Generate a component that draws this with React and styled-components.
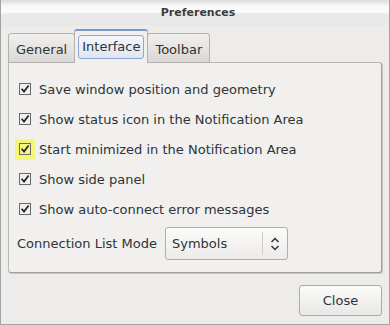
import React from 'react';
import styled, { createGlobalStyle } from 'styled-components';

const Global = createGlobalStyle`
    html, body {
        margin: 0;
        padding: 0;
        background: #edeceb;
    }
    * {
        box-sizing: border-box;
    }
`

const Window = styled.div`
    width: 390px;
    height: 325px;
    display: flex;
    flex-direction: column;
    background: #edeceb;
    border: 1px solid #a3a3a3;
    border-top: none;
    font-family: "DejaVu Sans", sans-serif;
    font-size: 13px;
    color: #2e3436;
`

const TitleBar = styled.div`
    height: 25px;
    display: flex;
    align-items: center;
    justify-content: center;
    padding-left: 6px;
    font-size: 11px;
    font-weight: bold;
    color: #3c3c3c;
    background: linear-gradient(#dcdcdc 0px, #f8f8f8 6px, #fbfbfb 12px, #eaeaea 14px, #e8e7e6 100%);
`

const Body = styled.div`
    flex: 1;
    display: flex;
    flex-direction: column;
    padding: 5px 7px 8px 7px;
`

const TabRow = styled.div`
    display: flex;
    align-items: flex-end;
    height: 33px;
    position: relative;
    z-index: 1;
`

const Tab = styled.div`
    height: ${p => (p.active ? '34px' : '30px')};
    padding: ${p => (p.active ? '4px 3px 4px' : '0 7px')};
    display: flex;
    align-items: center;
    border: 1px solid #b3b1ae;
    border-bottom: ${p => (p.active ? 'none' : '1px solid #b3b1ae')};
    border-top: ${p => (p.active ? '2px solid #7a9ac6' : '1px solid #b3b1ae')};
    border-radius: 3px 3px 0 0;
    margin-left: ${p => (p.active ? '-1px' : '0')};
    margin-right: ${p => (p.active ? '-1px' : '0')};
    background: ${p => (p.active ? '#f1f0ef' : 'linear-gradient(#f1f0ef, #dad8d6)')};
    position: relative;
    z-index: ${p => (p.active ? 2 : 1)};
`

const TabLabel = styled.div`
    padding: ${p => (p.active ? '3px 3px' : '3px 0 0')};
    border: ${p => (p.active ? '1px solid #8fa8cf' : 'none')};
    border-radius: 3px;
    background: ${p => (p.active ? 'linear-gradient(#f4f6fb, #dfe6f2)' : 'transparent')};
    line-height: 16px;
`

const Panel = styled.div`
    height: 211px;
    margin-top: -1px;
    background: #f1f0ef;
    border: 1px solid #b9b7b4;
    border-right-color: #a2a09d;
    border-bottom-color: #a2a09d;
    box-shadow: 1px 1px 0 #c9c7c4;
    border-radius: 0 3px 3px 3px;
    padding: 11px 0 0 10px;
    display: flex;
    flex-direction: column;
`

const Row = styled.div`
    height: 30px;
    display: flex;
    align-items: center;
    gap: 8px;
`

const BoxWrap = styled.div`
    width: 20px;
    height: 21px;
    margin-left: -4px;
    margin-right: -4px;
    display: flex;
    align-items: center;
    justify-content: center;
    background: ${p => (p.hl ? '#f5f57a' : 'transparent')};
`

const ComboRow = styled.div`
    margin-top: 3px;
    margin-left: -2px;
    display: flex;
    align-items: center;
    gap: 8px;
`

const Combo = styled.div`
    width: 123px;
    height: 33px;
    display: flex;
    align-items: center;
    border: 1px solid #b0aeab;
    border-radius: 3px;
    background: linear-gradient(#fbfbfa, #ecebe9);
`

const ComboText = styled.div`
    flex: 1;
    padding-left: 6px;
`

const ComboSep = styled.div`
    width: 1px;
    height: 23px;
    background: #cfcdca;
`

const ComboArrow = styled.div`
    width: 24px;
    display: flex;
    justify-content: center;
`

const Footer = styled.div`
    margin-top: auto;
    display: flex;
    justify-content: flex-end;
`

const Button = styled.div`
    width: 83px;
    height: 31px;
    display: flex;
    align-items: center;
    justify-content: center;
    border: 1px solid #adaba8;
    border-radius: 3px;
    background: linear-gradient(#fbfbfa, #e9e8e6);
`

function Check() {
    return (
        <svg width="12" height="12" viewBox="0 0 12 12">
            <rect x="0.5" y="0.5" width="11" height="11" fill="none" stroke="#6a6a6a" />
            <path d="M2.6 5.8 L5 8.6 L9.6 2.4" fill="none" stroke="#1f1f1f" strokeWidth="1.6" />
        </svg>
    )
}

function UpDown() {
    return (
        <svg width="10" height="14" viewBox="0 0 10 14">
            <path d="M1.5 5 L5 1.5 L8.5 5 M1.5 9 L5 12.5 L8.5 9" fill="none" stroke="#2e3436" strokeWidth="1.5" />
        </svg>
    )
}

export default function App() {
    const options = [
        'Save window position and geometry',
        'Show status icon in the Notification Area',
        'Start minimized in the Notification Area',
        'Show side panel',
        'Show auto-connect error messages',
    ]

    return (
        <Window>
            <Global />
            <TitleBar>Preferences</TitleBar>
            <Body>
                <TabRow>
                    <Tab><TabLabel>General</TabLabel></Tab>
                    <Tab active><TabLabel active>Interface</TabLabel></Tab>
                    <Tab><TabLabel>Toolbar</TabLabel></Tab>
                </TabRow>
                <Panel>
                    {options.map((o, i) => (
                        <Row key={o}>
                            <BoxWrap hl={i === 2}><Check /></BoxWrap>
                            <span>{o}</span>
                        </Row>
                    ))}
                    <ComboRow>
                        <span>Connection List Mode</span>
                        <Combo>
                            <ComboText>Symbols</ComboText>
                            <ComboSep />
                            <ComboArrow><UpDown /></ComboArrow>
                        </Combo>
                    </ComboRow>
                </Panel>
                <Footer>
                    <Button>Close</Button>
                </Footer>
            </Body>
        </Window>
    )
}
